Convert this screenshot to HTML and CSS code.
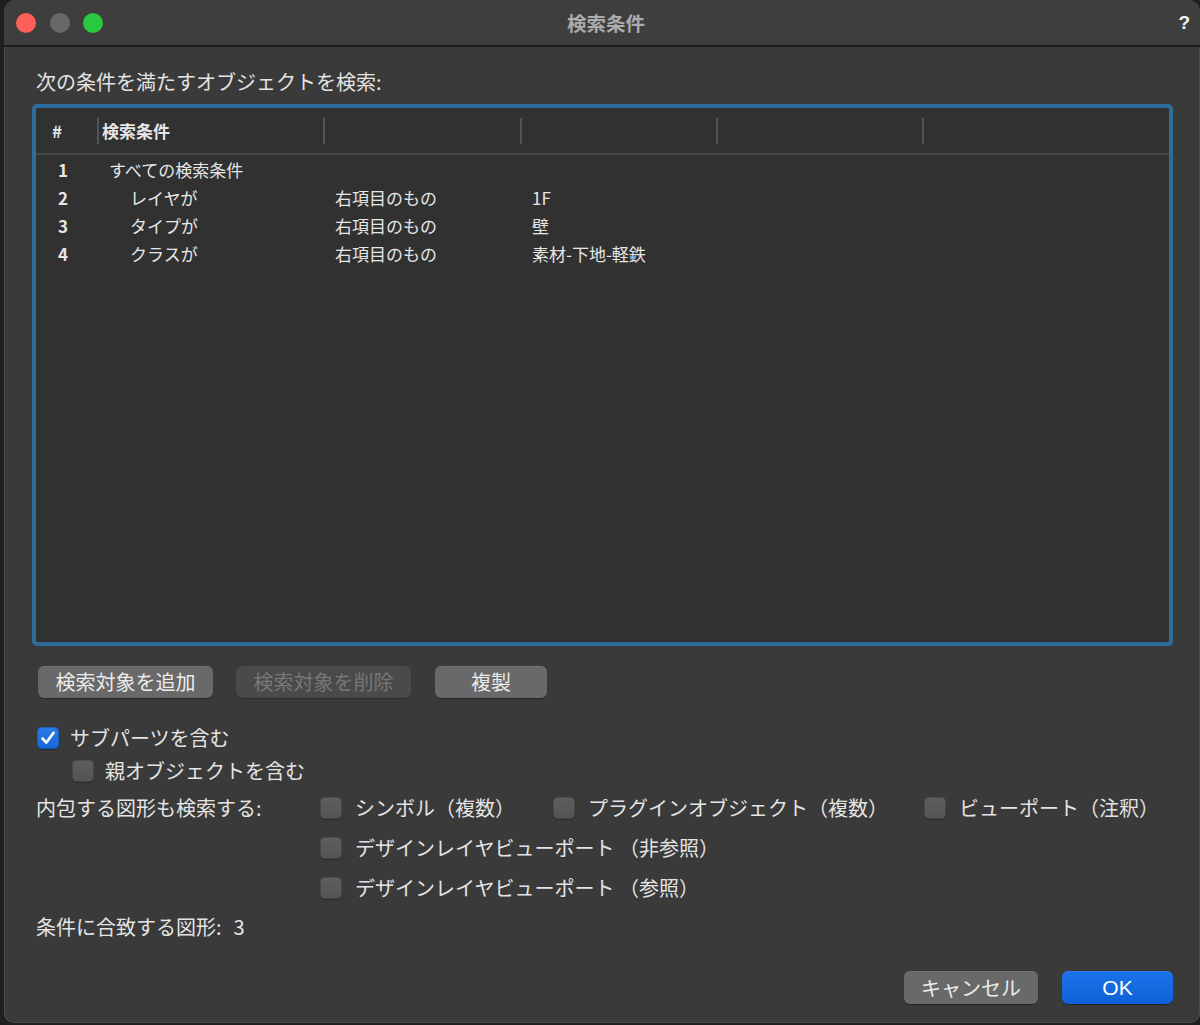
FILE: index.html
```html
<!doctype html>
<html lang="ja">
  <head>
    <meta charset="UTF-8" />
    <title>検索条件</title>
    <link rel="stylesheet" href="styles.css">
  </head>

  <body>
    <div class="window">
      <div class="titlebar">
        <div class="lights">
          <span class="light light-close"></span>
          <span class="light light-min"></span>
          <span class="light light-zoom"></span>
        </div>
        <div class="title">検索条件</div>
        <div class="help">?</div>
      </div>

      <div class="content">
        <div class="intro">次の条件を満たすオブジェクトを検索:</div>

        <div class="criteria">
          <div class="criteria-head">
            <div class="th th-num">#</div>
            <div class="th">検索条件</div>
            <div class="th"></div>
            <div class="th"></div>
            <div class="th"></div>
            <div class="th"></div>
          </div>
          <div class="row">
            <div class="cell cell-num">1</div>
            <div class="cell">すべての検索条件</div>
            <div class="cell"></div>
            <div class="cell"></div>
          </div>
          <div class="row">
            <div class="cell cell-num">2</div>
            <div class="cell cell-sub">レイヤが</div>
            <div class="cell">右項目のもの</div>
            <div class="cell">1F</div>
          </div>
          <div class="row">
            <div class="cell cell-num">3</div>
            <div class="cell cell-sub">タイプが</div>
            <div class="cell">右項目のもの</div>
            <div class="cell">壁</div>
          </div>
          <div class="row">
            <div class="cell cell-num">4</div>
            <div class="cell cell-sub">クラスが</div>
            <div class="cell">右項目のもの</div>
            <div class="cell">素材-下地-軽鉄</div>
          </div>
        </div>

        <div class="list-actions">
          <button class="btn btn-wide">検索対象を追加</button>
          <button class="btn btn-wide" disabled>検索対象を削除</button>
          <button class="btn btn-narrow">複製</button>
        </div>

        <label class="check check-first">
          <span class="box box-on">
            <svg viewBox="0 0 22 22" width="22" height="22">
              <path d="M5.5 11.5 L9.3 15.6 L16.6 5.8" fill="none" stroke="#fff" stroke-width="2.6" stroke-linecap="round" stroke-linejoin="round"/>
            </svg>
          </span>
          サブパーツを含む
        </label>
        <label class="check check-nested">
          <span class="box"></span>
          親オブジェクトを含む
        </label>

        <div class="include">
          <div class="include-label">内包する図形も検索する:</div>
          <label class="check"><span class="box"></span>シンボル（複数）</label>
          <label class="check"><span class="box"></span>プラグインオブジェクト（複数）</label>
          <label class="check"><span class="box"></span>ビューポート（注釈）</label>
          <label class="check include-wide"><span class="box"></span>デザインレイヤビューポート （非参照）</label>
          <label class="check include-wide"><span class="box"></span>デザインレイヤビューポート （参照）</label>
        </div>

        <div class="match-count">条件に合致する図形:<span class="match-value">3</span></div>

        <div class="dialog-actions">
          <button class="btn btn-cancel">キャンセル</button>
          <button class="btn btn-ok">OK</button>
        </div>
      </div>
    </div>
  </body>
</html>
```

FILE: styles.css
```css
html,
body {
  margin: 0;
  height: 100%;
}

body {
  background: #1f1f1f;
  font-family: 'Noto Sans CJK JP', 'Noto Sans', sans-serif;
  color: #e4e4e4;
  overflow: hidden;
}

.window {
  margin-left: 4px;
  width: 1196px;
  height: 1023px;
  background: #3a3a3a;
  border-radius: 12px 12px 10px 10px;
  box-shadow: inset 0 0 0 1px #4a4a4a;
  overflow: hidden;
}

/* title bar */

.titlebar {
  height: 45px;
  display: grid;
  grid-template-columns: 1fr auto 1fr;
  align-items: center;
  background: #3e3e3e;
  border-bottom: 2px solid #1c1c1c;
  padding: 0 10px 0 12px;
}

.lights {
  display: flex;
  gap: 13.5px;
}

.light {
  width: 20px;
  height: 20px;
  border-radius: 50%;
}

.light-close {
  background: #fe5f57;
}

.light-min {
  background: #686868;
}

.light-zoom {
  background: #2ac840;
}

.title {
  font-size: 19.5px;
  font-weight: 700;
  color: #acacac;
  padding-left: 6px;
}

.help {
  justify-self: end;
  font-family: 'Liberation Sans', sans-serif;
  font-size: 19px;
  font-weight: 700;
  color: #f2f2f2;
}

/* content */

.content {
  padding: 0 27px 0 28px;
  font-size: 20px;
  line-height: 24px;
}

.intro {
  margin: 23px 0 10px 4px;
}

.criteria {
  height: 534px;
  border: 4px solid #2c6d9c;
  border-radius: 5px;
  background: #313131;
  font-size: 17px;
  line-height: 28px;
  color: #e6e6e6;
}

.criteria-head,
.row {
  display: grid;
  grid-template-columns: 61px 226px 197px 196px 206px 1fr;
}

.criteria-head {
  height: 45px;
  align-items: center;
  border-bottom: 2px solid #474747;
  margin-bottom: 1px;
}

.th {
  height: 26px;
  line-height: 26px;
  border-left: 2px solid #545454;
  padding-left: 3px;
  font-weight: 700;
}

.th-num {
  border-left: none;
  padding-left: 16px;
}

.cell {
  padding-left: 12px;
  white-space: nowrap;
}

.cell-num {
  padding-left: 22px;
  font-weight: 700;
}

.cell-sub {
  padding-left: 33px;
}

/* buttons */

.list-actions {
  display: flex;
  gap: 23px;
  margin: 20px 0 0 6px;
}

.btn {
  height: 32px;
  border: none;
  border-radius: 6px;
  background: #696969;
  color: #ececec;
  font-family: inherit;
  font-size: 20px;
  line-height: 32px;
  padding: 0;
  box-shadow: 0 1px 1px rgba(0, 0, 0, 0.35), inset 0 1px 0 rgba(255, 255, 255, 0.08);
}

.btn-wide {
  width: 175px;
}

.btn-narrow {
  width: 112px;
  margin-left: 1px;
}

.btn:disabled {
  background: #4a4a4a;
  color: #777;
  box-shadow: 0 1px 1px rgba(0, 0, 0, 0.25);
}

/* checkboxes */

.check {
  display: flex;
  align-items: center;
  height: 24px;
  gap: 11px;
  white-space: nowrap;
}

.check-first {
  margin: 28px 0 0 5px;
}

.check-nested {
  margin: 9px 0 0 40px;
}

.box {
  flex: none;
  width: 22px;
  height: 22px;
  border-radius: 5px;
  background: linear-gradient(#5e5e5e, #535353);
  box-shadow: inset 0 0 0 1px rgba(0, 0, 0, 0.18), 0 1px 1px rgba(0, 0, 0, 0.3);
}

.box-on {
  background: linear-gradient(#2a7bea, #1866d6);
}

.box svg {
  display: block;
}

.include {
  display: grid;
  grid-template-columns: 284px 233px 371px auto;
  row-gap: 16px;
  margin: 13px 0 0 4px;
}

.include .check {
  gap: 13px;
}

.include-wide {
  grid-column: 2 / span 3;
}

.match-count {
  margin: 15px 0 0 4px;
}

.match-value {
  margin-left: 12px;
}

.dialog-actions {
  display: flex;
  justify-content: flex-end;
  gap: 24px;
  margin-top: 32px;
}

.btn-cancel {
  width: 134px;
  height: 33px;
}

.btn-ok {
  width: 111px;
  height: 33px;
  background: linear-gradient(#1b72ea, #0e62d6);
  color: #fff;
  font-family: 'Liberation Sans', sans-serif;
  font-size: 21px;
}
```
